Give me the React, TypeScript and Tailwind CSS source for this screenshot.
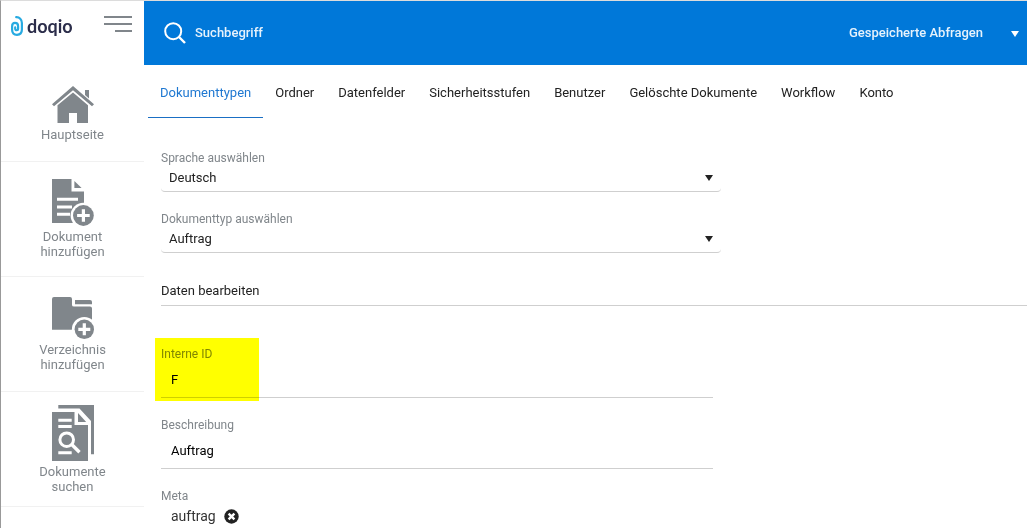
import React, { useState } from 'react';

const HomeIcon = () => (
  <svg width="42" height="38" viewBox="0 0 42 38" fill="currentColor" aria-hidden="true">
    <path d="M21 0 L42 18.2 L40 20.2 L21 4.2 L2 20.2 L0 18.2 Z" />
    <path d="M33 4 H37 V12.4 L33 9 Z" />
    <path d="M21 6.6 L36 19.2 V37 H25 V27 H17 V37 H5.5 V19.2 Z" />
  </svg>
);

const AddDocumentIcon = () => (
  <svg width="42" height="47" viewBox="0 0 42 47" fill="currentColor" aria-hidden="true">
    <path d="M0 0 H19.5 V12.5 H32 V44 H0 Z" />
    <path d="M22.4 2 L29.6 9 H22.4 Z" />
    <path d="M5 20.3 H26 M5 28 H20 M5 35.3 H18" stroke="#fff" strokeWidth="3" />
    <circle cx="31.4" cy="36.5" r="12.8" fill="#fff" />
    <circle cx="31.4" cy="36.5" r="10.4" />
    <path d="M31.4 30.2 V42.8 M25.1 36.5 H37.7" stroke="#fff" strokeWidth="3.2" />
  </svg>
);

const AddFolderIcon = () => (
  <svg width="42" height="42" viewBox="0 0 42 42" fill="currentColor" aria-hidden="true">
    <path d="M2 0 H18 Q20 0 20 2 V8 Q20 9.6 22 9.6 H38 Q40 9.6 40 11.6 V32.7 H0 V2 Q0 0 2 0 Z" />
    <path d="M23 3 H38 Q40 3 40 5 V7.2 H23 Z" />
    <circle cx="32.3" cy="32.3" r="12.4" fill="#fff" />
    <circle cx="32.3" cy="32.3" r="9.7" />
    <path d="M32.3 26.3 V38.3 M26.3 32.3 H38.3" stroke="#fff" strokeWidth="3.2" />
  </svg>
);

const SearchDocumentsIcon = () => (
  <svg width="42" height="56" viewBox="0 0 42 56" fill="currentColor" aria-hidden="true">
    <path d="M6.3 0 H42 V49.3 H39 V16 L27.5 3.4 H6.3 Z" />
    <path d="M0 7 H22.5 V20 H36 V56 H0 Z" />
    <path d="M26 8 L34.2 17 H26 Z" />
    <path d="M6.3 15.2 H19.7 M6.3 21.6 H19.7 M6.3 47.7 H19.7" stroke="#fff" strokeWidth="3" />
    <circle cx="14.7" cy="34.7" r="6.8" fill="none" stroke="#fff" strokeWidth="3" />
    <path d="M19.5 39.3 L27.5 47.3" stroke="#fff" strokeWidth="3.4" />
  </svg>
);

const Caret = ({ className }: { className: string }) => (
  <svg width="8" height="6" viewBox="0 0 8 6" fill="currentColor" className={className} aria-hidden="true">
    <path d="M0 0 H8 L4 6 Z" />
  </svg>
);

const navItems = [
  { label: 'Hauptseite', icon: HomeIcon, height: 'min-h-[95px]' },
  { label: 'Dokument hinzufügen', icon: AddDocumentIcon, height: 'min-h-[115px]' },
  { label: 'Verzeichnis hinzufügen', icon: AddFolderIcon, height: 'min-h-[115px]' },
  { label: 'Dokumente suchen', icon: SearchDocumentsIcon, height: 'min-h-[115px]' },
];

const tabs = [
  'Dokumenttypen',
  'Ordner',
  'Datenfelder',
  'Sicherheitsstufen',
  'Benutzer',
  'Gelöschte Dokumente',
  'Workflow',
  'Konto',
];

const Sidebar = () => (
  <aside className="w-[143px] shrink-0">
    <div className="flex h-[66px] items-start justify-between pt-[15px] pr-3 pl-[10px]">
      <a href="#" className="flex items-center gap-1">
        <svg width="12" height="20" viewBox="0 0 12 20" fill="none" stroke="#27aae1" strokeWidth="2.2" strokeLinecap="round" aria-hidden="true">
          <path d="M5.2 1.2 C8.4 1 10.9 3.4 10.9 7 V13.6 C10.9 17 8.8 18.8 6 18.8 C3 18.8 1.1 17 1.1 13.8 V10.4 C1.1 8.2 2.3 6.9 4 6.9 C6 6.9 7.1 8.3 7.1 10.2 V12.8 C7.1 14.7 4.2 14.7 4.2 12.8 V11.4" />
        </svg>
        <span className="font-['Lato',sans-serif] text-[18px] leading-5 font-bold text-[#2b2d4a]">doqio</span>
      </a>
      <button type="button" aria-label="Menü" className="flex flex-col items-end gap-[5px]">
        <span className="h-0.5 w-7 bg-[#80868b]" />
        <span className="h-0.5 w-7 bg-[#80868b]" />
        <span className="h-0.5 w-[17px] bg-[#80868b]" />
      </button>
    </div>
    <nav>
      {navItems.map(({ label, icon: Icon, height }) => (
        <a
          key={label}
          href="#"
          className={`flex flex-col items-center justify-center gap-[3px] border-b border-[#f1f1f1] px-8 text-center leading-[15px] text-[#80868b] ${height}`}
        >
          <Icon />
          <span>{label}</span>
        </a>
      ))}
    </nav>
  </aside>
);

const TopBar = () => (
  <header className="flex h-16 items-center justify-between bg-[#0078d9] text-[#e6f2fc]">
    <label className="flex flex-1 items-center gap-[9px] pl-5">
      <svg width="22" height="22" viewBox="0 0 22 22" fill="none" stroke="#fff" strokeWidth="2" aria-label="Suche">
        <circle cx="9.2" cy="9.2" r="8" />
        <path d="M15 15 L21 21" strokeWidth="2.4" />
      </svg>
      <input
        type="text"
        placeholder="Suchbegriff"
        className="w-full max-w-md font-medium outline-none placeholder:text-[#e6f2fc]"
      />
    </label>
    <div className="relative w-[178px]">
      <select aria-label="Gespeicherte Abfragen" className="w-full appearance-none font-medium outline-none">
        <option>Gespeicherte Abfragen</option>
      </select>
      <Caret className="pointer-events-none absolute top-2 right-2 text-white" />
    </div>
  </header>
);

const SelectField = ({ id, label, options }: { id: string; label: string; options: string[] }) => (
  <div className="max-w-[560px]">
    <label htmlFor={id} className="block text-xs leading-4 text-[#80868b]">
      {label}
    </label>
    <div className="relative">
      <select
        id={id}
        className="block h-[26px] w-full appearance-none rounded-sm border-b border-[#cfcfcf] px-2 pb-0.5 text-[#222] outline-none"
      >
        {options.map((option) => (
          <option key={option}>{option}</option>
        ))}
      </select>
      <Caret className="pointer-events-none absolute top-[9px] right-2 text-[#222]" />
    </div>
  </div>
);

const TextField = ({ id, label, value, highlighted }: { id: string; label: string; value: string; highlighted?: boolean }) => {
  const [text, setText] = useState(value);

  return (
    <div className="relative max-w-[552px]">
      <label htmlFor={id} className="block text-xs leading-4 text-[#80868b]">
        {label}
      </label>
      <input
        id={id}
        type="text"
        value={text}
        onChange={(e) => setText(e.target.value)}
        className="block h-9 w-full border-b border-[#cfcfcf] px-[10px] text-black outline-none"
      />
      {highlighted && (
        <div className="pointer-events-none absolute -top-2 -bottom-[3px] -left-[6px] w-[104px] bg-[#ffff00] mix-blend-multiply" />
      )}
    </div>
  );
};

export default function App() {
  const [activeTab, setActiveTab] = useState('Dokumenttypen');
  const [tags, setTags] = useState(['auftrag']);

  return (
    <div className="flex min-h-screen border-t border-l border-t-[#dcdcdc] border-l-[#999] bg-white font-['Roboto',sans-serif] text-[13px] leading-5">
      <Sidebar />
      <div className="min-w-0 flex-1">
        <TopBar />

        {/* Tabs */}
        <nav className="flex pl-1">
          {tabs.map((tab) => (
            <button
              key={tab}
              type="button"
              onClick={() => setActiveTab(tab)}
              className={`h-[53px] border-b px-3 pt-1 whitespace-nowrap ${
                activeTab === tab ? 'border-[#1a6fc4] text-[#1f78d1]' : 'border-transparent text-[#222]'
              }`}
            >
              {tab}
            </button>
          ))}
        </nav>

        <main className="pt-8 pl-[17px]">
          <div className="flex flex-col gap-[19px]">
            <SelectField id="language" label="Sprache auswählen" options={['Deutsch']} />
            <SelectField id="doctype" label="Dokumenttyp auswählen" options={['Auftrag']} />
          </div>

          <h2 className="mt-7 border-b border-[#cfcfcf] pb-1 text-[#222]">Daten bearbeiten</h2>

          <div className="mt-10 flex flex-col gap-[19px]">
            <TextField id="internal-id" label="Interne ID" value="F" highlighted />
            <TextField id="description" label="Beschreibung" value="Auftrag" />

            {/* Meta tags */}
            <div>
              <div className="text-xs leading-4 text-[#80868b]">Meta</div>
              {tags.map((tag) => (
                <div key={tag} className="flex items-center gap-2 pt-0.5 pl-[10px] text-sm text-[#333]">
                  <span>{tag}</span>
                  <button
                    type="button"
                    aria-label={`${tag} entfernen`}
                    onClick={() => setTags(tags.filter((t) => t !== tag))}
                  >
                    <svg width="15" height="15" viewBox="0 0 15 15" aria-hidden="true">
                      <circle cx="7.5" cy="7.5" r="7.2" fill="#222" />
                      <path d="M4.6 4.6 L10.4 10.4 M10.4 4.6 L4.6 10.4" stroke="#fff" strokeWidth="2.4" />
                    </svg>
                  </button>
                </div>
              ))}
            </div>
          </div>
        </main>
      </div>
    </div>
  );
}
